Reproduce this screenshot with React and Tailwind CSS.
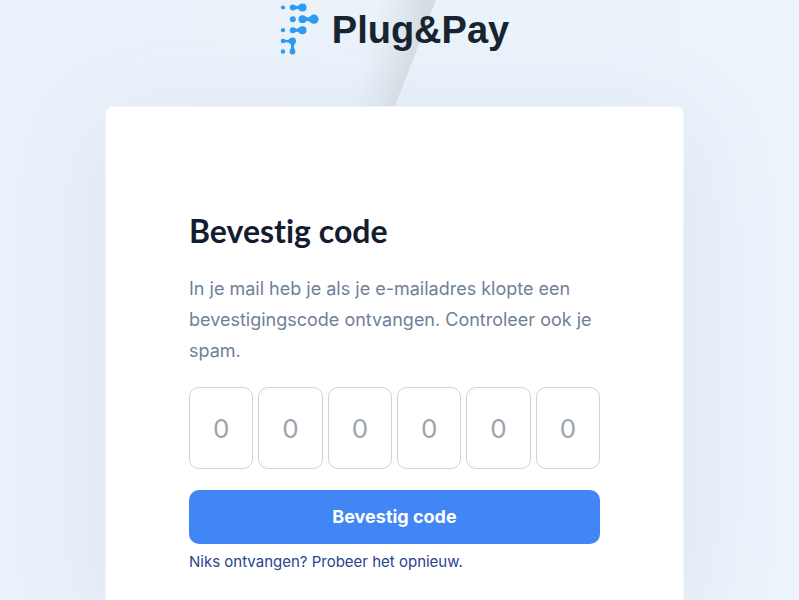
import React from "react";

const DIGITS = [1, 2, 3, 4, 5, 6];

function Fold() {
  return (
    <svg
      className="pointer-events-none absolute top-0 left-1/2 -ml-[100px]"
      width="160"
      height="140"
      viewBox="300 0 160 140"
      aria-hidden="true"
    >
      <defs>
        <linearGradient id="fold" gradientUnits="userSpaceOnUse" x1="368" y1="42" x2="416" y2="53">
          <stop offset="0" stopColor="#d3dce2" stopOpacity="0" />
          <stop offset="0.5" stopColor="#d3dce2" stopOpacity="0.4" />
          <stop offset="1" stopColor="#d5dde1" stopOpacity="1" />
        </linearGradient>
      </defs>
      <path d="M330 0H436L395 106L382 140H300Z" fill="url(#fold)" />
    </svg>
  );
}

function LogoMark() {
  return (
    <svg width="40" height="52" viewBox="280 3 40 52" fill="#2f9af1" stroke="#2f9af1" aria-hidden="true">
      <g strokeWidth="2">
        <path d="M293 7.5H302M302 19.2H314M293 30.2H302M283 41H292" />
        <path d="M292.5 41V51.5" />
      </g>
      <g stroke="none">
        <circle cx="283" cy="7.5" r="2.1" />
        <circle cx="292.8" cy="7.5" r="3" />
        <circle cx="302.5" cy="7.5" r="4" />
        <circle cx="292.8" cy="19.2" r="3" />
        <circle cx="302.5" cy="19.2" r="3.9" />
        <circle cx="314" cy="19.2" r="4.6" />
        <circle cx="283" cy="30.2" r="2.1" />
        <circle cx="292.8" cy="30.2" r="3" />
        <circle cx="302.5" cy="30.2" r="4" />
        <circle cx="283" cy="41" r="2.2" />
        <circle cx="292.5" cy="41" r="3.5" />
        <circle cx="283" cy="51.5" r="2.2" />
        <circle cx="292.5" cy="51.5" r="2.9" />
        <path d="M294.5 5.2Q297 7 300 4.5V10.5Q297 8 294.5 9.8ZM304.5 16.3Q308 18.8 311.5 15.5V22.9Q308 19.6 304.5 22.1ZM294.5 27.9Q297 29.7 300 27.2V33.2Q297 30.7 294.5 32.5Z" />
        <path d="M284 39.3Q287 41 290 38.7V43.3Q287 41.4 284 42.7ZM290 43H295Q293 46.5 294.8 50H290.2Q292 46.5 290 43Z" />
      </g>
    </svg>
  );
}

export default function App() {
  return (
    <div className="relative flex min-h-screen flex-col items-center overflow-hidden bg-linear-to-r from-[#ebf1fa] via-[#eaf2fa] to-[#ebf3fb] pr-[10px] font-['Inter',sans-serif]">
      <Fold />
      <header className="relative flex h-[106px] items-start gap-3 pt-[3px]">
        <LogoMark />
        <span className="pt-1 font-['Liberation_Sans',sans-serif] text-[38px] leading-[46px] font-bold text-[#182430]">
          Plug&amp;Pay
        </span>
      </header>
      <main className="relative w-full max-w-[579px] flex-1 rounded-t-lg border border-b-0 border-[#f0f5fa] bg-white px-[83px] pt-[104px] pb-5 shadow-[0_20px_100px_rgba(110,140,165,0.12)]">
        <h1 className="font-['Lato',sans-serif] text-[32px] leading-[40px] font-bold text-[#141c30] [font-variant-ligatures:none]">
          Bevestig code
        </h1>
        <p className="mt-[22px] text-lg leading-[31px] text-[#718096]">
          In je mail heb je als je e-mailadres klopte een bevestigingscode ontvangen. Controleer ook je spam.
        </p>
        <form onSubmit={(e) => e.preventDefault()}>
          <div className="mt-[21px] grid grid-cols-6 gap-[5px]">
            {DIGITS.map((n) => (
              <input
                key={n}
                type="text"
                inputMode="numeric"
                maxLength={1}
                placeholder="0"
                aria-label={`Cijfer ${n}`}
                className="h-[82px] w-full min-w-0 rounded-[10px] border border-[#cbd5e1] bg-white text-center text-[26px] text-[#141c30] placeholder:text-[#9ca3af]"
              />
            ))}
          </div>
          <button
            type="submit"
            className="mt-[21px] h-[54px] w-full rounded-[10px] bg-[#4285f5] text-lg font-bold text-white"
          >
            Bevestig code
          </button>
        </form>
        <a href="#opnieuw" className="mt-1.5 block text-[15px] leading-6 text-[#2a4390]">
          Niks ontvangen? Probeer het opnieuw.
        </a>
      </main>
    </div>
  );
}
